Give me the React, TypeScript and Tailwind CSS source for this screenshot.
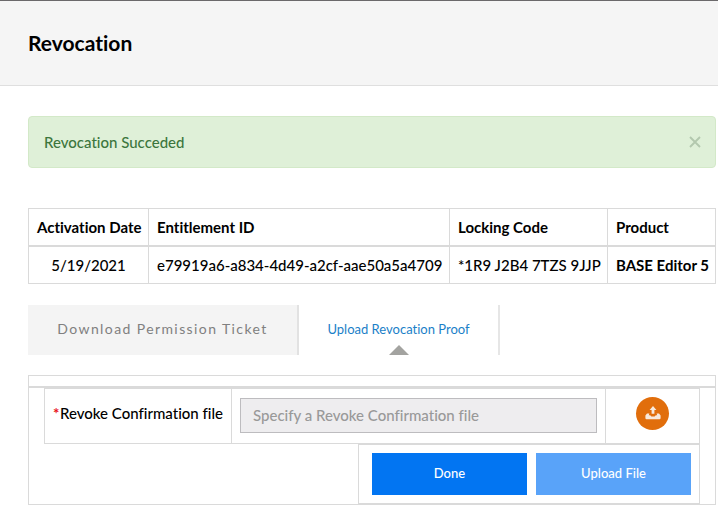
import React from "react";

const headCell = "h-[37px] border border-[#dadada] px-2";
const bodyCell = "h-[38px] border border-[#dadada] px-2";

function Alert() {
  return (
    <div
      role="status"
      className="flex h-[52px] items-center justify-between rounded-[4px] border border-[#d3e9c8] bg-[#dff0d8] pr-[14px] pl-[15px] text-[#3c763d]"
    >
      <span>Revocation Succeded</span>
      <button type="button" aria-label="Close" className="flex size-3 items-center justify-center text-[#b3c8ae]">
        <svg viewBox="0 0 12 12" className="size-3" fill="none" stroke="currentColor" strokeWidth="1.9">
          <path d="M1 1 11 11M11 1 1 11" />
        </svg>
      </button>
    </div>
  );
}

function EntitlementTable() {
  return (
    <table className="mt-10 w-full table-fixed border-collapse whitespace-nowrap">
      <colgroup>
        <col className="w-[120px]" />
        <col className="w-[301px]" />
        <col className="w-[158px]" />
        <col />
      </colgroup>
      <thead>
        <tr className="border-b-2 border-[#dadada] text-left font-bold">
          <th className={headCell}>Activation Date</th>
          <th className={headCell}>Entitlement ID</th>
          <th className={headCell}>Locking Code</th>
          <th className={headCell}>Product</th>
        </tr>
      </thead>
      <tbody>
        <tr className="text-center">
          <td className={bodyCell}>5/19/2021</td>
          <td className={bodyCell}>e79919a6-a834-4d49-a2cf-aae50a5a4709</td>
          <td className={bodyCell}>*1R9 J2B4 7TZS 9JJP</td>
          <td className={`${bodyCell} font-bold`}>BASE Editor 5</td>
        </tr>
      </tbody>
    </table>
  );
}

function Tabs() {
  return (
    <div role="tablist" className="mt-[21px] flex h-[50px]">
      <button
        type="button"
        role="tab"
        aria-selected="false"
        className="w-[271px] border-r-2 border-[#e2e2e2] bg-[#f4f4f4] pb-[2px] text-[14px] font-normal tracking-widest whitespace-nowrap text-[#808080]"
      >
        Download Permission Ticket
      </button>
      <button
        type="button"
        role="tab"
        aria-selected="true"
        className="relative w-[201px] border-r-2 border-[#e6e6e6] pb-[2px] text-[13px] font-normal whitespace-nowrap text-[#1b7fc8]"
      >
        Upload Revocation Proof
        <svg viewBox="0 0 20 10" className="absolute bottom-0 left-1/2 h-[10px] w-5 -translate-x-1/2" fill="#a3a3a0">
          <path d="M10 0 20 10H0Z" />
        </svg>
      </button>
    </div>
  );
}

function UploadIcon() {
  return (
    <svg viewBox="0 0 16 14" className="h-[14px] w-4" fill="#f8e9dc">
      <path d="M8 0 11.4 4H9.4V7.8H6.6V4H4.6Z" />
      <path d="M2 7.6H4.4L3.8 9.2H5.2L6.4 10.4H9.6L10.8 9.2H12.2L11.6 7.6H14L15.6 9.6V12Q15.6 13.2 14.4 13.2H1.6Q.4 13.2 .4 12V9.6Z" />
    </svg>
  );
}

function UploadPanel() {
  return (
    <form
      className="mt-5 border border-[#dadada]"
      onSubmit={(event) => event.preventDefault()}
    >
      <div className="h-3 border-b-2 border-[#dadada]" />
      <div className="px-[15px]">
        <div className="flex h-14 border border-[#dadada]">
          <label htmlFor="revoke-file" className="flex w-[186px] items-center px-2 pb-[6px] whitespace-nowrap">
            <span className="w-[9px] font-bold text-[#e8131b]">*</span>
            Revoke Confirmation file
          </label>
          <div className="flex flex-1 items-center border-x border-[#dadada] px-2 pb-[2px]">
            <input
              id="revoke-file"
              type="text"
              readOnly
              placeholder="Specify a Revoke Confirmation file"
              className="h-[35px] w-full border border-[#bdbcbf] bg-[#eeedef] px-3 outline-none placeholder:text-[#999999]"
            />
          </div>
          <div className="flex w-[93px] items-center justify-center pb-[6px]">
            <button
              type="button"
              aria-label="Choose file"
              className="flex size-[33px] items-center justify-center rounded-full bg-[#e16e0c]"
            >
              <UploadIcon />
            </button>
          </div>
        </div>
        <div className="ml-auto flex h-[60px] w-[342px] gap-[9px] border border-[#dadada] pt-2 pr-2 pl-[13px] text-[13px] text-white">
          <button type="button" className="h-[42px] flex-1 bg-[#0275f2] pb-[2px]">
            Done
          </button>
          <button type="submit" className="h-[42px] flex-1 bg-[#59a3f9] pb-[2px]">
            Upload File
          </button>
        </div>
      </div>
    </form>
  );
}

export default function App() {
  return (
    <div className="min-h-screen bg-white font-['Lato','Noto_Sans',sans-serif] text-[15px] leading-5 font-medium text-black [font-variant-ligatures:none]">
      <header className="flex h-[86px] items-center border-t border-b border-t-[#6b696b] border-b-[#dfdfdf] bg-[#f5f5f5] px-7">
        <h1 className="text-[21px] leading-6 font-bold">Revocation</h1>
      </header>
      <main className="pt-[30px] pr-[2px] pl-7">
        <Alert />
        <EntitlementTable />
        <Tabs />
        <UploadPanel />
      </main>
    </div>
  );
}
